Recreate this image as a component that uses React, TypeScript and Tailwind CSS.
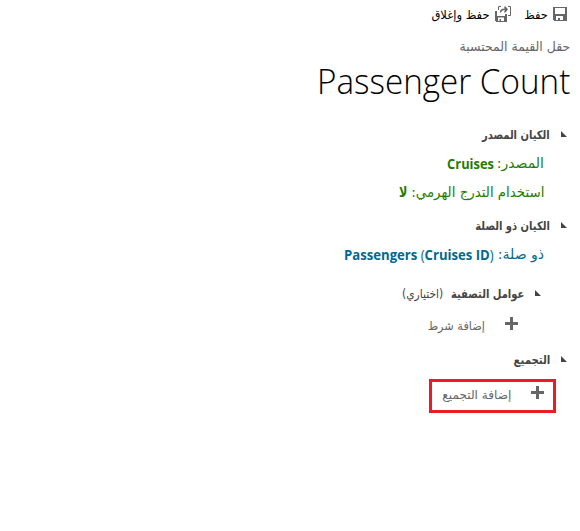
import type { ReactNode } from 'react';

const arabic = "font-['DejaVu_Sans',sans-serif]";
const latin = "font-['Open_Sans','DejaVu_Sans',sans-serif]";

// Keeps one line of text in a box of a set width; the text itself may be condensed.
function Line({ box, text = '', children }: { box: string; text?: string; children: ReactNode }) {
  return (
    <span className={`flex shrink-0 ${box}`}>
      <span className={`block shrink-0 origin-right whitespace-nowrap ${text}`}>{children}</span>
    </span>
  );
}

function SaveIcon() {
  return (
    <svg width="14" height="14" viewBox="0 0 14 14" className="shrink-0" shapeRendering="crispEdges">
      <path fill="#666" fillRule="evenodd" d="M0 0H14V14H1V13H0ZM2 1V7H12V1ZM3 9V13H5V11H7V13H10V9Z" />
    </svg>
  );
}

function SaveCloseIcon() {
  return (
    <svg width="16" height="16" viewBox="0 0 16 16" className="shrink-0">
      <path fill="#666" fillRule="evenodd" d="M0 5H2V10H10V8H12V16H1V15H0ZM3 11.500V15H4.500V13H6V15H9V11.500Z" />
      <path fill="none" stroke="#666" d="M6 .5H3.500V4M13 .5H15.500V9.500H13" />
      <path fill="none" stroke="#666" strokeWidth="1.500" d="M5.500 6.500C5.500 4.500 7 3.200 10 3.200" />
      <path fill="#666" d="M9 .5H10.500L13 3.300L10.500 6.500H9L10 3.500Z" />
    </svg>
  );
}

function Plus() {
  return (
    <svg width="13" height="13" viewBox="0 0 13 13" className="shrink-0" shapeRendering="crispEdges">
      <path fill="#666" d="M5 0H8V5H13V8H8V13H5V8H0V5H5Z" />
    </svg>
  );
}

function Arrow() {
  return (
    <svg width="6" height="6" viewBox="0 0 6 6" className="mb-[3px] shrink-0">
      <path fill="#444" d="M0 0L6 6H0Z" />
    </svg>
  );
}

export default function App() {
  return (
    <main dir="rtl" className={`h-[531px] w-[580px] overflow-hidden bg-white text-[#444] ${arabic}`}>
      <header className="flex h-7 items-center pr-[13px] text-[12px] text-black">
        <SaveIcon />
        <Line box="mr-[5px] w-[24px] pt-0.5" text="scale-x-95">حفظ</Line>
        <span className="mr-[13px] flex"><SaveCloseIcon /></span>
        <Line box="mr-[5px] w-[59px] pt-0.5" text="scale-x-[.96]">حفظ وإغلاق</Line>
      </header>
      <div className="flex h-9 items-center pr-[10px] pt-0.5 text-[13px] text-[#666]">
        <Line box="w-[111px]" text="scale-x-[.96]">حقل القيمة المحتسبة</Line>
      </div>
      <h1 className={`flex h-[34px] items-center pr-[10px] text-[34px] font-light text-black ${latin}`}>
        <Line box="w-[252px]" text="scale-x-[.977]">Passenger Count</Line>
      </h1>
      <section className="pt-[23px]">
        <h2 className="flex h-[28px] items-center pr-[13px] text-[12px] font-bold">
          <Arrow /><Line box="mr-[11px] w-[68px]" text="scale-x-[.83]">الكيان المصدر</Line>
        </h2>
        <p className="flex h-[29px] items-center pr-9 text-[14px] text-[#1e7d00]">
          <Line box="w-[46px]">المصدر:</Line>
          <Line box="mr-1 w-[47px]" text={`scale-x-[.92] font-bold ${latin}`}>Cruises</Line>
        </p>
        <p className="flex h-[29px] items-center pr-9 text-[14px] text-[#1e7d00]">
          <Line box="w-[133px]" text="scale-x-[.955]">استخدام التدرج الهرمي:</Line>
          <Line box="mr-1 w-[9px]" text="scale-x-[.8] font-bold">لا</Line>
        </p>
      </section>
      <section className="pt-[5px]">
        <h2 className="flex h-[28px] items-center pr-[13px] text-[12px] font-bold">
          <Arrow /><Line box="mr-[11px] w-[75px]" text="scale-x-[.83]">الكيان ذو الصلة</Line>
        </h2>
        <p className="flex h-[29px] items-center pr-9 text-[14px] text-[#006991]">
          <Line box="w-[46px]">ذو صلة:</Line>
          <Line box="mr-1 w-[150px]" text={`scale-x-[.937] font-bold ${latin}`}><bdi dir="ltr">Passengers <span className="font-normal">(</span>Cruises ID<span className="font-normal">)</span></bdi></Line>
        </p>
        <h3 className="mt-[11px] flex h-[28px] items-center pr-[39px] text-[12px] font-bold">
          <Arrow /><Line box="mr-[11px] w-[74px]" text="scale-x-[.83]">عوامل التصفية</Line>
          <Line box="mr-[7px] w-[41px]" text="scale-x-[.89] font-normal">(اختياري)</Line>
        </h3>
        <button className="flex h-[32px] items-center pr-[62px] text-[12px] text-[#666]">
          <span className="mb-px flex"><Plus /></span><Line box="mr-5 w-[57px] pt-[3px]" text="scale-x-[.94]">إضافة شرط</Line>
        </button>
      </section>
      <section className="pt-[6px]">
        <h2 className="flex h-[28px] items-center pr-[13px] text-[12px] font-bold">
          <Arrow /><Line box="mr-[11px] w-[36px]" text="scale-x-[.85]">التجميع</Line>
        </h2>
        <button className="mt-[5px] mr-6 flex h-[34px] w-[127px] items-center border-[3px] border-[#ed1c24] pr-[9px] text-[12px] text-[#666]">
          <span className="mb-[7px] flex"><Plus /></span><Line box="mr-5 w-[70px] pb-0.5" text="scale-x-[1.01]">إضافة التجميع</Line>
        </button>
      </section>
    </main>
  );
}
